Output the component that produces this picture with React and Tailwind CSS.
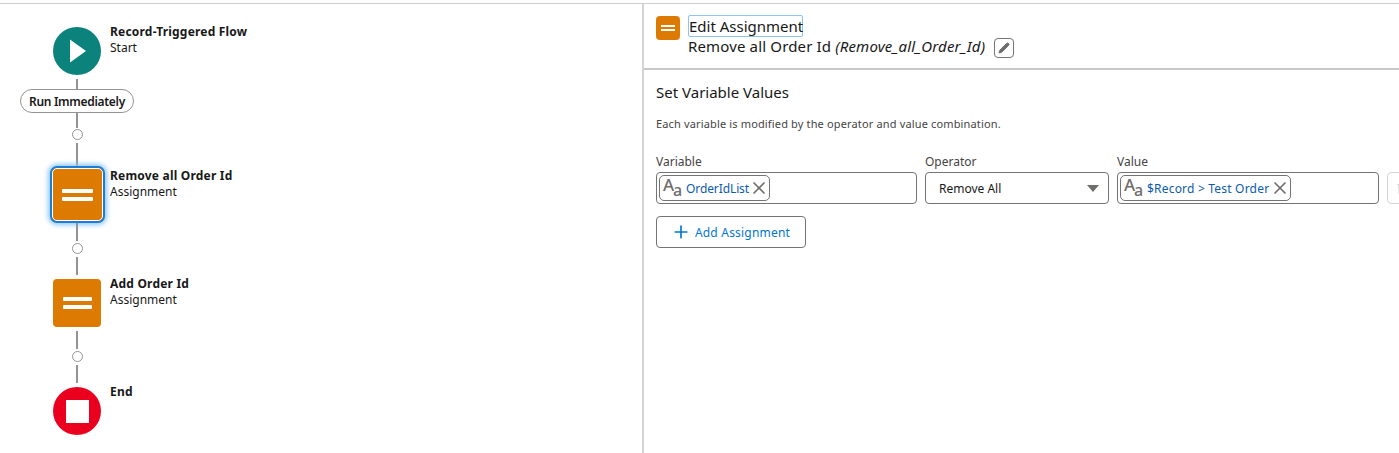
import React from 'react';
import { Plus, X, Pencil, Trash2 } from 'lucide-react';

const FONT = "font-['Noto_Sans',sans-serif]";

const Line = ({ top, height }) => (
    <div className="absolute left-[76px] w-[2px] bg-[#939393]" style={{ top, height }} />
);

const Dot = ({ top }) => (
    <div className="absolute left-[72px] w-[11px] h-[11px] rounded-full border border-[#939393] bg-white" style={{ top }} />
);

const Label = ({ top, title, sub }) => (
    <div className="absolute left-[110px] text-[12px] leading-[16px] text-[#181818] whitespace-nowrap" style={{ top }}>
        <div className="font-bold tracking-[0.2px]">{title}</div>
        {sub && <div>{sub}</div>}
    </div>
);

const Bars = ({ w, h }) => (
    <div className="flex flex-col items-center gap-[4px]">
        <div className="bg-white rounded-[1px]" style={{ width: w, height: h }} />
        <div className="bg-white rounded-[1px]" style={{ width: w, height: h }} />
    </div>
);

const TypeIcon = () => (
    <span className="relative w-[22px] h-[24px] text-[#706e6b] shrink-0 font-medium">
        <span className="absolute left-[2px] top-[-2px] text-[17px] leading-[22px]">A</span>
        <span className="absolute left-[12px] top-[4px] text-[16px] leading-[20px]">a</span>
    </span>
);

const Pill = ({ text, wide }) => (
    <div className="flex items-center h-[26px] border border-[#747474] rounded-[5px] pl-[1px] gap-[3px]">
        <TypeIcon />
        <span className={`text-[12px] text-[#0b5cab] whitespace-nowrap pt-[1px] ${wide ? 'tracking-[0.2px]' : 'tracking-[-0.1px]'}`}>{text}</span>
        <X size={20} strokeWidth={2} className={`text-[#706e6b] ${wide ? 'ml-[-2px]' : 'ml-[-3px]'}`} />
    </div>
);

const Field = ({ label, width, children }) => (
    <div className="shrink-0" style={{ width }}>
        <div className="text-[12px] leading-[16px] text-[#444444] pt-[1px] mb-[2px]">{label}</div>
        {children}
    </div>
);

const FlowCanvas = () => (
    <div className="relative w-[642px] shrink-0 border-r-2 border-[#d4d4d4] box-content">
        <div className="absolute left-[53px] top-[23px] w-[48px] h-[48px] rounded-full bg-[#0b827c] flex items-center justify-center">
            <svg width="20" height="26" viewBox="0 0 20 26"><path d="M3 1.5v23L19 13z" fill="#fff" /></svg>
        </div>
        <Label top={20} title="Record-Triggered Flow" sub="Start" />

        <Line top={75} height={10} />
        <div className="absolute left-[20px] top-[85px] w-[114px] h-[24px] pt-[1px] rounded-full border border-[#939393] bg-white flex items-center justify-center text-[12px] font-semibold tracking-[-0.3px] text-[#181818]">
            Run Immediately
        </div>
        <Line top={109} height={15} />
        <Dot top={125} />
        <Line top={139} height={23} />

        <div className="absolute left-[50px] top-[162px] w-[55px] h-[57px] rounded-[7px] border-2 border-[#1b7ed6] bg-[#dd7a01] shadow-[0_0_5px_2px_#8ec5f5] outline outline-1 outline-white outline-offset-[-3px] flex items-center justify-center">
            <Bars w={31} h={4} />
        </div>
        <Label top={164} title="Remove all Order Id" sub="Assignment" />

        <Line top={219} height={18} />
        <Dot top={239} />
        <Line top={253} height={18} />

        <div className="absolute left-[53px] top-[275px] w-[48px] h-[48px] rounded-[4px] bg-[#dd7a01] flex items-center justify-center">
            <Bars w={29} h={4} />
        </div>
        <Label top={272} title="Add Order Id" sub="Assignment" />

        <Line top={327} height={18} />
        <Dot top={347} />
        <Line top={361} height={18} />

        <div className="absolute left-[53px] top-[383px] w-[48px] h-[48px] rounded-full bg-[#ea001e] flex items-center justify-center">
            <div className="w-[23px] h-[23px] bg-white" />
        </div>
        <Label top={380} title="End" />
    </div>
);

const EditorPanel = () => (
    <div className="flex-1 min-w-0 overflow-hidden">
        <div className="h-[53px] border-b-2 border-[#c9c9c9] box-content flex pl-[12px] pt-[11px]">
            <div className="w-[24px] h-[24px] rounded-[4px] bg-[#dd7a01] flex items-center justify-center mt-[1px]">
                <div className="flex flex-col gap-[2px]">
                    <div className="w-[14px] h-[2px] bg-white" />
                    <div className="w-[14px] h-[2px] bg-white" />
                </div>
            </div>
            <div className="ml-[8px] text-[#181818]">
                <div className="w-[115px] h-[22px] border border-[#8cc4f3] rounded-[2px] text-[15px] leading-[20px] whitespace-nowrap">Edit Assignment</div>
                <div className="flex items-start text-[15px] tracking-[0.15px] leading-[20px] mt-[-1px] whitespace-nowrap">
                    <span>Remove all Order Id&nbsp;<em>(Remove_all_Order_Id)</em></span>
                    <span className="ml-[9px] mt-[2px] w-[20px] h-[20px] border border-[#747474] rounded-[4px] flex items-center justify-center">
                        <Pencil size={12} fill="#706e6b" stroke="#706e6b" />
                    </span>
                </div>
            </div>
        </div>
        <div className="pl-[12px] pt-[12px]">
            <div className="text-[15px] leading-[20px] text-[#181818]">Set Variable Values</div>
            <div className="text-[11px] tracking-[0.15px] leading-[16px] text-[#444444] mt-[14px]">Each variable is modified by the operator and value combination.</div>
            <div className="flex gap-[8px] mt-[21px]">
                <Field label="Variable" width={261}>
                    <div className="h-[32px] border border-[#747474] rounded-[4px] flex items-center pl-[2px]">
                        <Pill text="OrderIdList" />
                    </div>
                </Field>
                <Field label="Operator" width={184}>
                    <div className="h-[32px] border border-[#747474] rounded-[4px] flex items-center justify-between pl-[13px] pr-[9px] pt-[1px] text-[12px] text-[#181818]">
                        Remove All
                        <svg width="12" height="7" viewBox="0 0 12 7"><path d="M0 0h12L6 7z" fill="#706e6b" /></svg>
                    </div>
                </Field>
                <Field label="Value" width={262}>
                    <div className="h-[32px] border border-[#747474] rounded-[4px] flex items-center pl-[2px]">
                        <Pill text="$Record > Test Order" wide />
                    </div>
                </Field>
                <div className="mt-[19px] w-[32px] h-[32px] shrink-0 border border-[#d4d4d4] rounded-[4px] flex items-center justify-center">
                    <Trash2 size={14} className="text-[#d4d4d4]" />
                </div>
            </div>
            <button className="mt-[12px] w-[150px] h-[32px] border border-[#747474] rounded-[4px] flex items-center justify-center gap-[4px] pr-[1px] text-[12px] tracking-[0.2px] text-[#0176d3]">
                <Plus size={20} strokeWidth={2} />
                <span className="pt-[1px]">Add Assignment</span>
            </button>
        </div>
    </div>
);

const App = () => (
    <div className={`${FONT} w-[1399px] h-[453px] bg-white overflow-hidden flex flex-col`}>
        <div className="h-[3px] shrink-0" />
        <div className="h-[1px] shrink-0 bg-[#cfcfcf]" />
        <div className="flex flex-1 min-h-0 relative">
            <FlowCanvas />
            <EditorPanel />
        </div>
    </div>
);

export default App;
